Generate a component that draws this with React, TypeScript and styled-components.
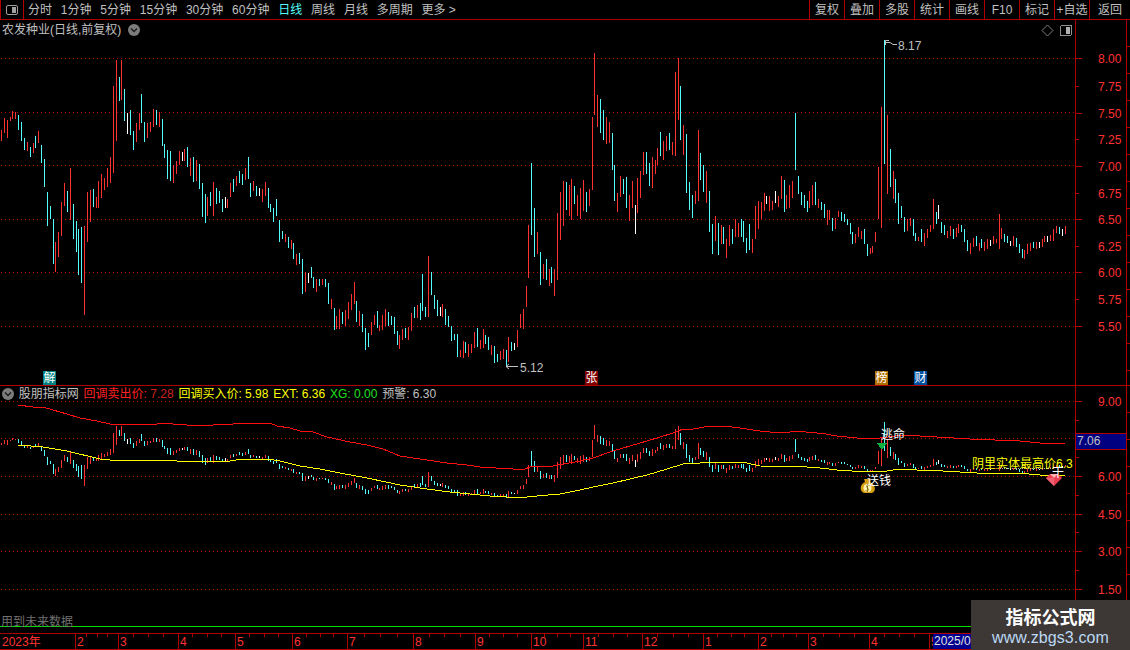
import React from "react";
import styled, { createGlobalStyle } from "styled-components";

const RED = "#ff3232";
const LINE = "#b00000";
const CYAN = "#54fcfc";

const Global = createGlobalStyle`
  html, body { margin: 0; padding: 0; background: #000; }
  body { font: 12px/14px "Liberation Sans", "Noto Sans CJK SC", sans-serif; color: #c0c0c0; }
`;

const Screen = styled.div`
  position: relative; width: 1130px; height: 650px; background: #000; overflow: hidden;
  display: flex; flex-direction: column;
`;
const Toolbar = styled.div`
  display: flex; align-items: stretch; height: 19px; border-bottom: 1px solid ${LINE}; flex: none;
`;
const LayoutBtn = styled.div`
  width: 22px; border-left: 1px solid ${LINE}; border-right: 1px solid ${LINE};
  display: flex; align-items: center; justify-content: center; flex: none;
`;
const Periods = styled.div`
  display: flex; align-items: center; gap: 8.8px; padding: 1px 0 0 4px; white-space: nowrap;
`;
const Period = styled.span<{ $on?: boolean }>`
  color: ${(p) => (p.$on ? CYAN : "#c0c0c0")};
`;
const Actions = styled.div`
  display: flex; margin-left: auto;
`;
const Action = styled.div<{ $w?: number }>`
  width: ${(p) => p.$w ?? 35}px; box-sizing: border-box; border-left: 1px solid ${LINE}; padding-top: 1px;
  display: flex; align-items: center; justify-content: center; white-space: nowrap;
`;

const Pane = styled.div<{ $h: number; $rule?: boolean }>`
  display: flex; height: ${(p) => p.$h}px; flex: none;
  ${(p) => (p.$rule ? `border-bottom: 1px solid ${LINE};` : "")}
`;
const Plot = styled.div<{ $green?: boolean }>`
  position: relative; width: 1075px; flex: none;
  ${(p) => (p.$green ? "height: 240px; border-bottom: 1px solid #00e000;" : "")}
  svg.chart { display: block; position: absolute; left: 0; top: 0; }
`;
const Axis = styled.div`
  position: relative; width: 50px; flex: none; border-left: 1px solid ${LINE};
`;
const Side = styled.div`
  width: 3px; flex: none; border-left: 1px solid ${LINE};
  background: repeating-linear-gradient(to bottom, #000 0 26px, #b00000 26px 27px);
`;
const Tick = styled.i<{ $y: number; $major?: boolean }>`
  position: absolute; left: 0; top: ${(p) => p.$y}px; height: 1px;
  width: ${(p) => (p.$major ? 6 : 3)}px; background: ${LINE};
`;
const Price = styled.span<{ $y: number }>`
  position: absolute; left: 22px; top: ${(p) => p.$y}px; color: ${RED};
`;
const PriceBox = styled.div`
  position: absolute; left: 0; right: 0; top: 47px; height: 15px; background: #000080;
  border-top: 1px solid ${LINE}; border-bottom: 1px solid ${LINE};
  color: #c0c0c0; line-height: 15px; padding-left: 1px;
`;
const Header = styled.div<{ $top: number; $gap: number }>`
  position: absolute; left: 2px; top: ${(p) => p.$top}px; display: flex; align-items: center;
  gap: ${(p) => p.$gap}px; white-space: nowrap; z-index: 2;
`;
const Legend = styled.span<{ $c?: string }>`
  color: ${(p) => p.$c ?? "#c0c0c0"};
`;
const LegendGroup = styled.span`
  display: inline-flex; gap: 3.3px;
`;
const Note = styled.span<{ $x: number; $y: number; $c?: string }>`
  position: absolute; left: ${(p) => p.$x}px; top: ${(p) => p.$y}px;
  color: ${(p) => p.$c ?? "#fff"}; white-space: nowrap; z-index: 3;
`;
const Tag = styled.span<{ $x: number; $bg: string }>`
  position: absolute; left: ${(p) => p.$x}px; top: 351px; width: 13px; height: 14px;
  background: ${(p) => p.$bg}; color: #fff; text-align: center; line-height: 14px; font-size: 12px;
`;

const TimeAxis = styled.div`
  position: relative; margin-top: 3px; height: 15px; flex: none;
  border-top: 1px solid ${LINE}; border-bottom: 1px solid ${LINE};
`;
const Major = styled.i<{ $x: number }>`
  position: absolute; left: ${(p) => p.$x}px; top: 0; width: 1px; height: 15px; background: ${LINE};
`;
const Minor = styled.i<{ $x: number }>`
  position: absolute; left: ${(p) => p.$x}px; top: 0; width: 1px; height: 3px; background: ${LINE};
`;
const TimeLabel = styled.span<{ $x: number; $clip?: number }>`
  position: absolute; left: ${(p) => p.$x}px; top: 1px; color: ${RED}; white-space: nowrap;
  ${(p) => (p.$clip ? `width: ${p.$clip}px; overflow: hidden;` : "")}
`;
const DateBox = styled.span`
  position: absolute; left: 933px; top: 0; width: 37px; height: 15px; background: #000090;
  color: #e0e0e0; line-height: 15px; padding-left: 1px; overflow: hidden; white-space: nowrap;
`;
const Strip = styled.div`
  display: flex; height: 4px; overflow: hidden; flex: none; border: none;
`;
const Cell = styled.div<{ $w: number; $c?: string }>`
  width: ${(p) => p.$w}px; flex: none; box-sizing: border-box; border-right: 1px solid ${LINE};
  color: ${(p) => p.$c ?? "#e0e0e0"}; line-height: 14px; text-align: center; white-space: nowrap; overflow: hidden;
`;
const Watermark = styled.div`
  position: absolute; left: 971px; top: 600px; width: 159px; height: 50px; background: #3d3836;
  z-index: 5; display: flex; flex-direction: column; align-items: center;
`;
const MarkTitle = styled.div`
  margin-top: 5px; color: #fff; font: bold 18px/22px "Noto Sans CJK SC", sans-serif;
`;
const MarkUrl = styled.div`
  margin-top: 2px; color: #bcd8f4; font: 16px/18px "Liberation Sans", sans-serif; letter-spacing: 0.1px;
`;

type Seg = { ox: number; oy: number; d: string };
const segs: Seg[] = [
  { ox: 0, oy: 100, d: "4 90 122 r,13 54 98 r,22 60 113 r,31 52 64 r,37 33 58 r,46 36 56 r,55 45 90 c,64 66 122 c,73 114 150 c,82 126 152 r,91 141 170 c,100 129 158 r,106 108 144 c,115 93 129 r,124 135 188 c,133 177 260 c,142 276 377 c,151 318 357 c,160 357 491 c,166 426 515 r,175 396 471 r,184 306 407 r,193 249 317 r,202 273 335 c,211 204 359 r,220 312 416 c,229 363 455 c,235 387 524 c,244 381 548 c,253 378 644 r,262 276 426 r,271 270 365 r,280 267 320 c,289 291 323 r,295 243 323 r,304 222 293 r,313 234 269 r,322 204 260 r,331 171 248 r,340 -42 218 r,349 -120 122 r,358 -69 3 c,364 -120 0 r,373 -33 63 c,382 39 102 w,391 30 105 c,400 93 150 c,409 69 126 r,418 39 90 r,424 -18 69 c,433 66 126 c,442 69 114 r,451 66 96 r,460 27 81 r,469 30 75 c,478 36 81 r,487 57 138 c,493 132 174 c,502 150 237 c,511 153 243 c,520 196 249 r,529 183 222 r,538 153 195 r,547 156 183 w,553 147 183 r,562 141 201 c,571 174 228 r,580 171 246 c,589 180 244 r,598 192 267 c,607 249 351 c,616 282 369 c,622 291 348 r,631 276 318 c,640 246 348 r,649 264 312 c,658 273 309 c,667 297 336 c,676 291 324 w,682 297 324 r,691 249 291 r,700 237 276 c,709 228 258 r,718 213 249 c,727 222 255 c,736 204 240 r,745 171 237 c,751 249 291 c,760 243 273 r,769 258 288 c,778 264 288 w" },
  { ox: 260, oy: 140, d: "7 147 186 r,16 126 168 r,25 144 204 c,31 192 216 c,40 204 246 c,49 177 228 c,58 240 306 c,67 273 297 c,76 282 306 r,85 291 324 c,94 300 327 r,100 309 357 c,109 342 375 r,118 339 372 c,127 357 462 c,136 396 456 r,145 399 429 w,154 381 414 c,160 411 444 c,169 417 456 r,178 417 438 c,187 417 435 r,196 417 441 c,205 429 492 c,214 477 507 r,223 504 570 c,229 528 567 r,238 507 567 r,247 516 552 c,256 510 558 r,265 486 537 r,274 462 510 r,283 426 492 r,289 483 546 c,298 513 558 r,307 522 576 c,316 564 630 c,325 579 621 c,334 546 585 r,343 525 555 r,352 513 564 c,358 555 573 r,367 525 570 r,376 507 558 r,385 516 558 c,394 528 555 c,403 531 582 c,412 573 615 c,418 585 627 r,427 567 600 r,436 564 594 c,445 561 600 r,454 519 573 r,463 501 534 c,472 495 534 r,481 489 540 c,487 402 513 c,496 501 531 c,505 348 531 r,514 396 465 c,523 465 507 c,532 480 528 c,541 501 528 w,547 492 531 r,556 507 555 c,565 528 561 c,574 558 603 c,583 582 600 c,592 582 651 c,601 630 651 r,610 603 654 r,616 606 639 c,625 612 651 r,634 612 639 r,643 576 624 r,652 564 621 c,661 600 627 r,670 567 624 r,676 585 612 c,685 591 630 c,694 615 645 r,703 618 669 c,712 642 666 c,721 633 660 r,730 627 657 r,739 630 681 c,745 591 666 r,754 606 633 c,763 609 630 w,772 570 621 r,781 522 564 r,790 507 567 r,799 438 501 r,805 255 414 r,814 69 285 c,823 204 351 c,832 276 342 r" },
  { ox: 520, oy: 40, d: "61 636 735 c,70 672 717 r,79 657 720 c,88 687 738 r,94 681 729 c,103 687 768 r,112 519 720 r,121 456 600 r,130 423 558 r,139 426 510 c,148 435 528 r,154 417 540 r,163 438 492 c,172 465 528 r,181 444 537 r,190 420 513 r,199 456 516 c,208 447 498 r,217 231 450 r,223 39 225 r,232 165 261 r,241 177 279 c,250 210 300 c,259 231 312 r,268 246 309 r,277 279 390 c,283 375 483 c,292 459 516 r,301 408 471 r,310 417 462 c,319 411 504 c,328 465 543 r,337 423 504 r,346 495 582 w,352 414 519 r,361 393 474 r,370 336 405 r,379 336 402 c,388 369 438 c,397 351 444 r,406 360 402 r,412 324 375 r,421 276 348 c,430 303 360 r,439 288 333 r,448 279 330 c,457 306 345 r,466 96 348 r,475 54 240 r,481 138 300 c,490 255 345 r,499 282 459 c,508 426 510 c,517 465 534 c,526 453 492 r,535 270 483 r,541 339 420 c,550 375 456 c,559 393 489 r,568 453 576 c,577 552 642 c,586 528 603 r,595 549 645 c,604 555 612 r,610 561 612 c,619 597 654 r,628 555 618 r,637 567 612 c,646 537 591 r,655 549 591 r,664 537 591 c,670 543 606 c,679 594 639 c,688 552 630 c,697 597 639 r,706 498 597 r,715 483 567 r,724 486 537 r,733 459 513 r,739 468 492 w,748 468 513 r,757 483 510 r,766 453 489 w,775 468 501 r,784 408 477 r,793 420 516 c,799 465 507 r,808 435 504 r,817 423 474 r,826 219 390 c,835 408 462 c" },
  { ox: 780, oy: 30, d: "64 486 525 c,73 495 534 c,82 513 546 c,88 483 534 r,97 465 525 r,106 456 525 c,115 507 534 r,124 516 540 c,133 522 564 c,142 540 585 r,148 540 570 r,157 564 603 c,166 564 597 r,175 543 561 r,184 546 573 c,193 552 576 c,202 567 585 c,211 579 612 c,217 606 642 c,226 612 639 r,235 591 621 r,244 603 627 r,253 597 642 c,262 642 678 c,271 654 672 r,277 648 669 r,286 606 636 r,295 411 567 r,304 231 594 r,313 30 402 c,322 255 492 r,331 357 471 c,340 423 507 r,346 447 519 c,355 489 582 c,364 528 564 c,373 561 606 c,382 567 603 r,391 564 588 r,400 567 618 c,406 609 633 c,415 621 633 r,424 597 636 c,433 609 648 r,442 597 624 r,451 585 606 r,460 507 597 r,469 546 582 c,475 525 567 w,484 576 609 c,493 585 615 c,502 603 624 r,511 588 618 r,520 597 627 c,529 594 621 r,535 582 609 r,544 585 606 c,553 597 636 c,562 630 663 c,571 639 672 r,580 624 651 r,589 618 648 c,598 639 663 r,604 627 654 c,613 636 663 r,622 627 657 r,631 630 648 w,640 618 642 r,649 627 639 r,658 552 657 r,664 594 627 r,673 612 636 c,682 618 639 c,691 633 648 w,700 618 648 r,709 624 651 c,718 642 669 c,727 657 684 c,733 660 687 r,742 642 672 r,751 639 663 r,760 636 654 c,769 636 657 r,778 636 654 w,787 627 651 r,793 618 636 r,802 618 636 w,811 615 633 r,820 597 633 r,829 588 609 r,838 591 612 c,847 597 618 w,856 588 612 r" },
];

type Bar = { x: number; t: number; b: number; c: string };
const colors: Record<string, string> = { r: RED, c: CYAN, w: "#ffffff" };
const bars: Bar[] = segs.flatMap((s) =>
  s.d.split(",").map((e) => {
    const [z, t, b, c] = e.split(" ");
    return {
      x: Math.floor(s.ox + (Number(z) - 1) / 3),
      t: Math.round(s.oy + Number(t) / 3),
      b: Math.round(s.oy + Number(b) / 3),
      c: colors[c],
    };
  })
);
const toLower = (y: number) => 476 - (272 - y) * 0.2336;

const redLine =
  "18,405 33,407 43,407 53,410 67,414 80,418 97,421 110,424 157,424 160,423 200,426 213,425 233,424 240,423 270,423 277,426 290,428 300,431 313,432 327,437 350,442 367,445 383,449 400,456 420,459 447,463 467,465 480,467 496,468 513,469 525,469 530,467 553,466 580,461 593,458 613,451 647,441 673,433 683,429 693,429 710,426 723,426 740,428 760,431 770,432 790,432 795,431 817,433 820,433 837,436 857,438 880,438 903,435 937,437 970,439 1020,441 1040,443 1065,443";
const yellowLine =
  "18,445 43,447 67,451 100,459 110,460 173,460 177,461 230,461 243,459 267,459 280,461 300,466 320,469 340,473 367,478 400,485 427,489 450,492 480,495 490,496 507,497 527,497 537,496 560,494 580,490 593,487 613,483 647,475 667,469 683,464 700,463 730,462 747,463 760,466 807,467 820,468 837,470 867,472 887,471 900,469 917,470 943,471 977,473 1017,473 1040,475 1065,476";

const Bars: React.FC<{ lower?: boolean }> = ({ lower }) => (
  <>
    {bars.map((b, i) => {
      const t = lower ? Math.round(toLower(b.t)) : b.t;
      const e = lower ? Math.round(toLower(b.b)) : b.b;
      return <rect key={i} x={b.x} y={t} width={1} height={Math.max(1, e - t)} fill={b.c} />;
    })}
  </>
);

const Grid: React.FC<{ ys: number[] }> = ({ ys }) => (
  <>
    {ys.map((y) => (
      <line key={y} x1={1} x2={1075} y1={y + 0.5} y2={y + 0.5} stroke="#b00000" strokeDasharray="1 3" />
    ))}
  </>
);

const Chevron: React.FC = () => (
  <svg width="12" height="12" viewBox="0 0 12 12">
    <circle cx="6" cy="6" r="6" fill="#7c7c7c" />
    <path d="M3 4.5 L6 7.5 L9 4.5" fill="none" stroke="#1c1c1c" strokeWidth="1.4" />
  </svg>
);

const SplitIcon: React.FC = () => (
  <svg width="12" height="10" viewBox="0 0 12 10">
    <rect x="0.5" y="0.5" width="11" height="9" rx="1.5" fill="#000" stroke="#a0a0a0" />
    <rect x="6" y="2" width="4" height="6" fill="#a0a0a0" />
  </svg>
);

const periods = ["分时", "1分钟", "5分钟", "15分钟", "30分钟", "60分钟", "日线", "周线", "月线", "多周期", "更多 >"];
const actions = ["复权", "叠加", "多股", "统计", "画线", "F10", "标记", "+自选"];

const upperTicks = [
  [58, "8.00", 1], [86, "7.75", 0], [113, "7.50", 1], [139, "7.25", 0], [166, "7.00", 1], [193, "6.75", 0],
  [219, "6.50", 1], [246, "6.25", 0], [272, "6.00", 1], [299, "5.75", 0], [326, "5.50", 1],
] as const;
const lowerTicks = [[401, "9.00"], [439, "7.50"], [476, "6.00"], [514, "4.50"], [551, "3.00"], [589, "1.50"]] as const;
const lowerMinor = [420, 457, 495, 532, 570];

const majors = [75, 118, 178, 235, 292, 347, 413, 475, 531, 583, 642, 703, 758, 808, 869, 929];
const months = ["2", "3", "4", "5", "6", "7", "8", "9", "10", "11", "12", "1", "2", "3", "4", "5"];
const minors = majors.slice(0, -1).flatMap((m, i) => {
  const step = (majors[i + 1] - m) / 4;
  return [1, 2, 3].map((k) => Math.round(m + k * step));
});

const cells: [number, string, string?][] = [
  [42, "沪深"], [31, "A"], [42, ""], [29, ""], [33, ""], [30, ""], [34, ""], [41, ""], [26, ""], [34, ""], [33, ""],
  [36, ""], [36, ""], [36, ""], [36, ""], [36, ""], [36, ""], [36, ""], [36, ""], [36, ""], [36, ""], [36, ""], [36, "千"],
  [32, "千", "#e0e0e0"], [32, "板块", CYAN],
];

export default function App() {
  return (
    <Screen>
      <Global />
      <Toolbar>
        <LayoutBtn><SplitIcon /></LayoutBtn>
        <Periods>
          {periods.map((p) => (
            <Period key={p} $on={p === "日线"}>{p}</Period>
          ))}
        </Periods>
        <Actions>
          {actions.map((a) => (
            <Action key={a}>{a}</Action>
          ))}
          <Action $w={41}>返回</Action>
        </Actions>
      </Toolbar>

      <Pane $h={365} $rule>
        <Plot>
          <Header $top={3} $gap={7}>
            <span>农发种业(日线,前复权)</span>
            <Chevron />
          </Header>
          <svg className="chart" width="1075" height="365" viewBox="0 20 1075 365" shapeRendering="crispEdges">
            <Grid ys={[58, 112, 165, 219, 272, 326]} />
            <Bars />
            <g shapeRendering="auto" fill="none" stroke="#c0c0c0">
              <path d="M885.5 45 V40.5 H889 M885.5 42.5 H890 L893 44.5 H897" />
              <path d="M506 366.5 H518 M506 366.5 L509 364 M506 366.5 L509 369" />
              <path d="M1047.5 25 L1053 30.5 L1047.5 36 L1042 30.5 Z" stroke="#808080" />
            </g>
            <g transform="translate(1060 25)">
              <rect x="0.5" y="0.5" width="11" height="10" rx="1.5" fill="#000" stroke="#909090" />
              <rect x="6" y="2" width="4" height="7" fill="#b0b0b0" />
            </g>
          </svg>
          <Note $x={898} $y={19} $c="#c0c0c0">8.17</Note>
          <Note $x={520} $y={341} $c="#c0c0c0">5.12</Note>
          <Tag $x={43} $bg="#008080">解</Tag>
          <Tag $x={585} $bg="#800000">张</Tag>
          <Tag $x={875} $bg="#b07000">榜</Tag>
          <Tag $x={914} $bg="#0050a0">财</Tag>
        </Plot>
        <Axis>
          {upperTicks.map(([y, t, m]) => (
            <React.Fragment key={t}>
              <Tick $y={y - 20} $major={!!m} />
              <Price $y={y - 26}>{t}</Price>
            </React.Fragment>
          ))}
        </Axis>
        <Side />
      </Pane>

      <Pane $h={244}>
        <Plot $green>
          <Header $top={1} $gap={4.8}>
            <Chevron />
            <Legend>股朋指标网</Legend>
            <LegendGroup>
              <Legend $c="#ff2020">回调卖出价:</Legend>
              <Legend $c="#d02020">7.28</Legend>
            </LegendGroup>
            <LegendGroup>
              <Legend $c="#ffff00">回调买入价:</Legend>
              <Legend $c="#ffff00">5.98</Legend>
            </LegendGroup>
            <LegendGroup>
              <Legend $c="#ffff00">EXT:</Legend>
              <Legend $c="#ffff00">6.36</Legend>
            </LegendGroup>
            <LegendGroup>
              <Legend $c="#20e020">XG:</Legend>
              <Legend $c="#20e020">0.00</Legend>
            </LegendGroup>
            <LegendGroup>
              <Legend>预警:</Legend>
              <Legend>6.30</Legend>
            </LegendGroup>
          </Header>
          <svg className="chart" width="1075" height="240" viewBox="0 386 1075 240" shapeRendering="crispEdges">
            <Grid ys={[401, 438, 476, 514, 551, 589]} />
            <Bars lower />
            <polyline points={redLine} fill="none" stroke="#ff1010" strokeWidth="1" />
            <polyline points={yellowLine} fill="none" stroke="#ffff00" strokeWidth="1" />
            <line x1="1000" x2="1053" y1="468.5" y2="468.5" stroke="#b0b0b0" strokeDasharray="1 1" />
            <polygon points="877,443 887,443 882,450" fill="#10b040" />
            <g shapeRendering="auto">
              <path d="M864 479 L871 479 L870 482 C875 484 877 491 872 493 L864 493 C859 491 860 484 865 482 Z" fill="#d8a010" />
              <ellipse cx="867.5" cy="488" rx="4" ry="4" fill="#fff4b0" />
              <path d="M869.5 485.5 C867 484.5 865.5 486 867.5 488 C869.5 490 868 491.5 865.5 490.5 M867.5 484 V492" fill="none" stroke="#806000" strokeWidth="0.8" />
              <polygon points="1046,478 1050,474 1058,474 1062,478 1054,486" fill="#e84050" />
              <polygon points="1050,474 1058,474 1054,478" fill="#ffb0b0" />
              <polygon points="1046,478 1054,478 1054,486" fill="#f06070" />
            </g>
          </svg>
          <Note $x={881} $y={42}>逃命</Note>
          <Note $x={867} $y={88}>送钱</Note>
          <Note $x={972} $y={71} $c="#ffff00">阴里实体最高价6.3</Note>
          <Note $x={1052} $y={80}>干</Note>
          <Note $x={1} $y={229} $c="#707070">用到未来数据</Note>
        </Plot>
        <Axis>
          {lowerTicks.map(([y, t]) => (
            <React.Fragment key={t}>
              <Tick $y={y - 386} $major />
              <Price $y={y - 392}>{t}</Price>
            </React.Fragment>
          ))}
          {lowerMinor.map((y) => (
            <Tick key={y} $y={y - 386} />
          ))}
          <PriceBox>7.06</PriceBox>
        </Axis>
        <Side />
      </Pane>

      <TimeAxis>
        <TimeLabel $x={2}>2023年</TimeLabel>
        {majors.map((m, i) => (
          <React.Fragment key={m}>
            <Major $x={m} />
            <TimeLabel $x={m + 2} $clip={i === majors.length - 1 ? 2 : undefined}>{months[i]}</TimeLabel>
          </React.Fragment>
        ))}
        {minors.map((m) => (
          <Minor key={m} $x={m} />
        ))}
        <DateBox>2025/0</DateBox>
      </TimeAxis>
      <Strip>
        {cells.map(([w, t, c], i) => (
          <Cell key={i} $w={w} $c={c}>{t}</Cell>
        ))}
      </Strip>

      <Watermark>
        <MarkTitle>指标公式网</MarkTitle>
        <MarkUrl>www.zbgs3.com</MarkUrl>
      </Watermark>
    </Screen>
  );
}
